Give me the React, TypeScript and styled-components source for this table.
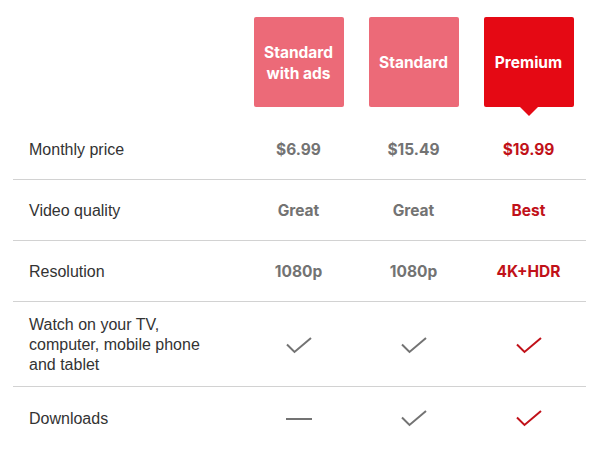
import React from "react";
import styled, { createGlobalStyle } from "styled-components";

const GlobalStyle = createGlobalStyle`
  html, body { margin: 0; padding: 0; background: #ffffff; }
  body { font-family: "Liberation Sans", Arial, sans-serif; }
`;

const Page = styled.div`
  width: 600px;
  height: 450px;
  overflow: hidden;
  background: #fff;
`;

const Table = styled.div`
  margin: 0 14px 0 13px;
`;

const grid = `
  display: grid;
  grid-template-columns: 228px repeat(3, 115px);
`;

const HeaderRow = styled.div`
  ${grid}
  padding-top: 17px;
  height: 119px;
  box-sizing: border-box;
`;

const PlanBox = styled.div<{ $selected?: boolean }>`
  position: relative;
  justify-self: center;
  width: 90px;
  height: 90px;
  border-radius: 2px;
  background: ${(p) => (p.$selected ? "#e50914" : "#ec6a78")};
  color: #fff;
  display: flex;
  align-items: center;
  justify-content: center;
  text-align: center;
  font-family: Inter, "Liberation Sans", sans-serif;
  font-weight: 700;
  font-size: 15.5px;
  line-height: 21px;
  padding: 1px 4px 0;
  box-sizing: border-box;
  ${(p) =>
    p.$selected
      ? `&::after {
    content: "";
    position: absolute;
    left: 50%;
    bottom: -9px;
    transform: translateX(-50%);
    border-left: 9px solid transparent;
    border-right: 9px solid transparent;
    border-top: 9px solid #e50914;
  }`
      : ""}
`;

const Row = styled.div<{ $last?: boolean }>`
  ${grid}
  align-items: center;
  min-height: 61px;
  padding: 13px 0 11px;
  box-sizing: border-box;
  border-bottom: ${(p) => (p.$last ? "none" : "1px solid #d2d2d2")};
`;

const Label = styled.div`
  padding-left: 16px;
  font-size: 16px;
  line-height: 20px;
  color: #333;
  padding-right: 20px;
`;

const Value = styled.div<{ $selected?: boolean }>`
  text-align: center;
  font-family: Inter, "Liberation Sans", sans-serif;
  font-size: 15.5px;
  font-weight: 700;
  line-height: 20px;
  color: ${(p) => (p.$selected ? "#c11119" : "#737373")};
  display: flex;
  justify-content: center;
  align-items: center;
`;

const Check = ({ red }: { red?: boolean }) => (
  <svg width="26" height="17" viewBox="0 0 26 17">
    <path
      d="M1 7.5 L8.5 15 L25 1"
      fill="none"
      stroke={red ? "#c11119" : "#737373"}
      strokeWidth="2"
    />
  </svg>
);

const Dash = styled.span`
  display: block;
  width: 26px;
  height: 2px;
  background: #737373;
`;

type Cell = string | "check" | "dash";

const rows: { label: React.ReactNode; cells: Cell[] }[] = [
  { label: "Monthly price", cells: ["$6.99", "$15.49", "$19.99"] },
  { label: "Video quality", cells: ["Great", "Great", "Best"] },
  { label: "Resolution", cells: ["1080p", "1080p", "4K+HDR"] },
  {
    label: "Watch on your TV, computer, mobile phone and tablet",
    cells: ["check", "check", "check"],
  },
  { label: "Downloads", cells: ["dash", "check", "check"] },
];

export default function App() {
  return (
    <Page>
      <GlobalStyle />
      <Table>
        <HeaderRow>
          <div />
          <PlanBox>Standard with ads</PlanBox>
          <PlanBox>Standard</PlanBox>
          <PlanBox $selected>Premium</PlanBox>
        </HeaderRow>
        {rows.map((r, i) => (
          <Row key={i} $last={i === rows.length - 1}>
            <Label>{r.label}</Label>
            {r.cells.map((c, j) => (
              <Value key={j} $selected={j === 2}>
                {c === "check" ? <Check red={j === 2} /> : c === "dash" ? <Dash /> : c}
              </Value>
            ))}
          </Row>
        ))}
      </Table>
    </Page>
  );
}
